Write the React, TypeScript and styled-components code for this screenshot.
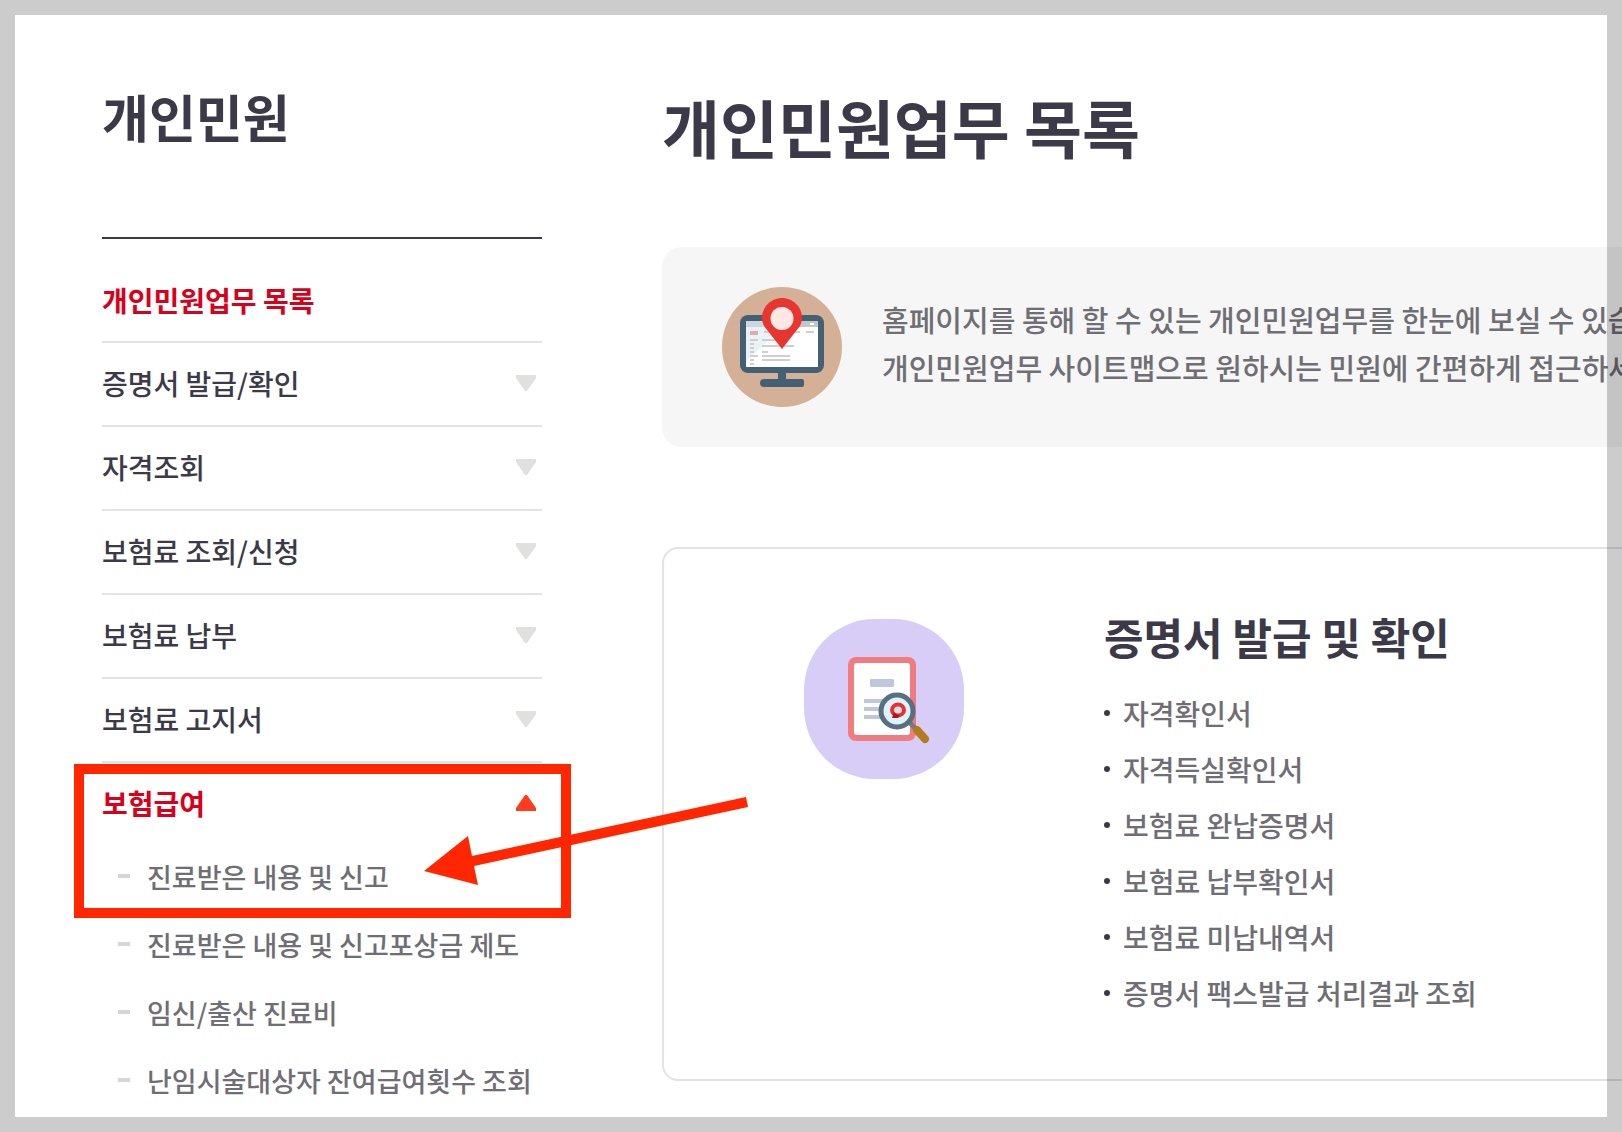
import React, { useState } from "react";
import styled, { createGlobalStyle } from "styled-components";

const ink = "#3c3949";
const red = "#d9001b";
const marker = "#ff2600";
const gray = "#6f6e74";
const line = "#e2e2e8";

const GlobalStyle = createGlobalStyle`
  *, *::before, *::after { box-sizing: border-box; }
  body {
    margin: 0;
    background: #fff;
    color: ${ink};
    font-family: "Noto Sans CJK KR", "Noto Sans", sans-serif;
  }
  h1, h2, p, ul { margin: 0; padding: 0; }
  ul { list-style: none; }
  a { color: inherit; text-decoration: none; }
  button { border: 0; background: none; padding: 0; font: inherit; color: inherit; cursor: pointer; }
`;

const Page = styled.div`
  display: flex;
  align-items: flex-start;
  gap: 120px;
  min-height: 100vh;
  padding: 76px 0 15px 102px;
  overflow: hidden;
`;

const Frame = styled.div`
  position: fixed;
  inset: 0;
  border: 15px solid rgba(0, 0, 0, 0.2);
  pointer-events: none;
`;

const Sidebar = styled.nav`
  flex: 0 0 440px;
`;

const SideTitle = styled.h2`
  height: 161px;
  font-size: 51px;
  line-height: 80px;
  font-weight: 700;
`;

const Menu = styled.ul`
  padding-top: 20px;
  border-top: 2px solid ${ink};
`;

const MenuItem = styled.li<{ $last?: boolean }>`
  position: relative;
  border-bottom: ${(p) => (p.$last ? "0" : `2px solid ${line}`)};
`;

const MenuLink = styled.a`
  display: flex;
  align-items: center;
  height: 82px;
  font-size: 28px;
  font-weight: 700;
  color: ${red};
`;

const MenuButton = styled.button<{ $open: boolean }>`
  display: flex;
  align-items: center;
  justify-content: space-between;
  width: 100%;
  height: ${(p) => (p.$open ? 80 : 82)}px;
  padding: 0 6px ${(p) => (p.$open ? 0 : 2)}px 0;
  font-size: 28px;
  font-weight: ${(p) => (p.$open ? 700 : 500)};
  color: ${(p) => (p.$open ? red : ink)};
`;

const SubItem = styled.li`
  display: flex;
  align-items: center;
  gap: 17px;
  height: 68px;
  padding: 0 0 2px 16px;
  font-size: 27px;
  color: ${gray};
  font-weight: 500;
  white-space: nowrap;

  &::before {
    content: "";
    width: 12px;
    height: 4px;
    background: #d6d6d6;
  }
`;

const Highlight = styled.div`
  position: absolute;
  top: 1px;
  left: -28px;
  right: -29px;
  height: 154px;
  border: 10px solid ${marker};
  pointer-events: none;
`;

const Arrow = styled.svg`
  position: absolute;
  top: 33px;
  left: 322px;
  width: 324px;
  height: 90px;
  z-index: 1;
  pointer-events: none;
`;

const Main = styled.main`
  flex: 1 0 1100px;
`;

const PageTitle = styled.h1`
  height: 171px;
  padding-top: 4px;
  font-size: 63px;
  line-height: 92px;
  font-weight: 700;
`;

const Banner = styled.section`
  display: flex;
  align-items: center;
  gap: 40px;
  padding: 40px 60px;
  border-radius: 20px;
  background: #f6f6f6;
`;

const BannerText = styled.p`
  padding-bottom: 8px;
  font-size: 29px;
  line-height: 48px;
  font-weight: 500;
  color: ${gray};
  white-space: nowrap;
`;

const Card = styled.section`
  display: flex;
  align-items: flex-start;
  gap: 140px;
  margin-top: 100px;
  padding: 70px 140px 58px;
  border: 2px solid ${line};
  border-radius: 16px;
`;

const CardTitle = styled.h2`
  margin-bottom: 32px;
  font-size: 43px;
  line-height: 34px;
  font-weight: 700;
`;

const ServiceItem = styled.li`
  display: flex;
  align-items: center;
  gap: 13px;
  height: 56px;
  font-size: 28px;
  font-weight: 500;
  color: ${gray};

  &::before {
    content: "";
    width: 6px;
    height: 6px;
    border-radius: 50%;
    background: ${ink};
  }
`;

const Icon = styled.svg<{ $size: number }>`
  flex: none;
  width: ${(p) => p.$size}px;
  height: ${(p) => p.$size}px;
`;

const Caret = styled.svg`
  width: 20px;
  height: 16px;
`;

const menus = ["증명서 발급/확인", "자격조회", "보험료 조회/신청", "보험료 납부", "보험료 고지서", "보험급여"];

const benefits = [
  "진료받은 내용 및 신고",
  "진료받은 내용 및 신고포상금 제도",
  "임신/출산 진료비",
  "난임시술대상자 잔여급여횟수 조회",
];

const services = [
  "자격확인서",
  "자격득실확인서",
  "보험료 완납증명서",
  "보험료 납부확인서",
  "보험료 미납내역서",
  "증명서 팩스발급 처리결과 조회",
];

function SitemapIcon() {
  return (
    <Icon $size={120} viewBox="0 0 120 120" aria-hidden="true">
      <circle cx="60" cy="60" r="60" fill="#d4b096" />
      <rect x="18" y="28" width="84" height="58" rx="8" fill="#446074" />
      <rect x="24" y="34" width="72" height="46" fill="#fff" />
      <path d="M24 34h44L24 74z" fill="#e8f2f7" />
      <rect x="24" y="34" width="72" height="6" fill="#c4c6c8" />
      <path d="M24 34h34v6H24z" fill="#cdd8dc" />
      <rect x="88" y="36" width="4" height="2" fill="#fff" />
      <rect x="28" y="44" width="8" height="4" fill="#dfa9ae" />
      <g fill="#cfcfcf">
        <path d="M42 44h8v2h-8zM70 44h8v2h-8zM84 44h8v2h-8z" />
        <path d="M40 52h16v2H40zM40 58h32v2H40zM40 64h6v2h-6zM40 68h28v2H40zM40 72h28v2H40z" />
        <path d="M28 52h8v2h-8zM28 56h4v2h-4zM28 60h4v2h-4zM28 64h4v2h-4zM28 68h8v2h-8zM28 72h4v2h-4zM28 76h4v2h-4z" />
      </g>
      <path d="M56 86h8v6h16q2 0 2 2v4q0 2-2 2H42q-4 0-4-4t4-4h14z" fill="#446074" />
      <path d="M60 11C49 11 40 20 40 31q0 4 2 8l18 23 18-23q2-4 2-8C80 20 71 11 60 11z" fill="#e8352f" />
      <circle cx="60" cy="31.500" r="11.500" fill="#fde8e6" />
    </Icon>
  );
}

function CertificateIcon() {
  return (
    <Icon $size={160} viewBox="0 0 160 160" aria-hidden="true">
      <rect width="160" height="160" rx="71" fill="#d8cdf6" />
      <rect x="44" y="38" width="68" height="84" rx="8" fill="#f17c80" />
      <rect x="50" y="44" width="56" height="72" rx="3" fill="#fff" />
      <rect x="66" y="60" width="24" height="8" rx="1" fill="#bfc7de" />
      <path d="M60 80h26v4H60zM60 88h20v4H60zM60 96h20v4H60z" fill="#bfc7de" />
      <path d="M104 102l8 8" stroke="#6b7f8d" strokeWidth="5" />
      <path d="M113 111l8 9" stroke="#b57a1c" strokeWidth="8" strokeLinecap="round" />
      <circle cx="93" cy="92" r="16" fill="#dcf3fa" stroke="#576f81" strokeWidth="5" />
      <ellipse cx="94" cy="91" rx="6" ry="5.500" fill="#f4d9dc" stroke="#e8312e" strokeWidth="4" />
      <path d="M88 99l2-6q3 4 6 3l-2 3z" fill="#b5121a" />
      <path d="M91 90.500q3-4 6 0-1 3-3 3t-3-3z" fill="#cfe0ee" />
    </Icon>
  );
}

export default function App() {
  const [open, setOpen] = useState("보험급여");

  return (
    <>
      <GlobalStyle />
      <Page>
        <Sidebar aria-label="개인민원">
          <SideTitle>개인민원</SideTitle>
          <Menu>
            <MenuItem>
              <MenuLink href="#list">개인민원업무 목록</MenuLink>
            </MenuItem>
            {menus.map((name, i) => {
              const isOpen = open === name;
              const isLast = i === menus.length - 1;
              return (
                <MenuItem key={name} $last={isLast}>
                  <MenuButton
                    type="button"
                    $open={isOpen}
                    aria-expanded={isOpen}
                    onClick={() => setOpen(isOpen ? "" : name)}
                  >
                    {name}
                    <Caret viewBox="0 0 20 16" aria-hidden="true">
                      {isOpen ? (
                        <path d="M9 0h2l9 13v3H0v-3z" fill="#ff3b1f" />
                      ) : (
                        <path d="M0 0h20v3l-9 13H9L0 3z" fill="#e0e0df" />
                      )}
                    </Caret>
                  </MenuButton>
                  {isLast && isOpen && (
                    <>
                      <ul>
                        {benefits.map((b) => (
                          <SubItem key={b}>
                            <a href="#benefit">{b}</a>
                          </SubItem>
                        ))}
                      </ul>
                      <Highlight />
                      <Arrow viewBox="0 0 324 90" aria-hidden="true">
                        <path d="M0 75L44 40l4 20L322 1l2 10L50 70l4 19z" fill={marker} />
                      </Arrow>
                    </>
                  )}
                </MenuItem>
              );
            })}
          </Menu>
        </Sidebar>
        <Main>
          <PageTitle>개인민원업무 목록</PageTitle>
          <Banner>
            <SitemapIcon />
            <BannerText>
              홈페이지를 통해 할 수 있는 개인민원업무를 한눈에 보실 수 있습니다.
              <br />
              개인민원업무 사이트맵으로 원하시는 민원에 간편하게 접근하세요.
            </BannerText>
          </Banner>
          <Card>
            <CertificateIcon />
            <div>
              <CardTitle>증명서 발급 및 확인</CardTitle>
              <ul>
                {services.map((s) => (
                  <ServiceItem key={s}>
                    <a href="#service">{s}</a>
                  </ServiceItem>
                ))}
              </ul>
            </div>
          </Card>
        </Main>
      </Page>
      <Frame />
    </>
  );
}
